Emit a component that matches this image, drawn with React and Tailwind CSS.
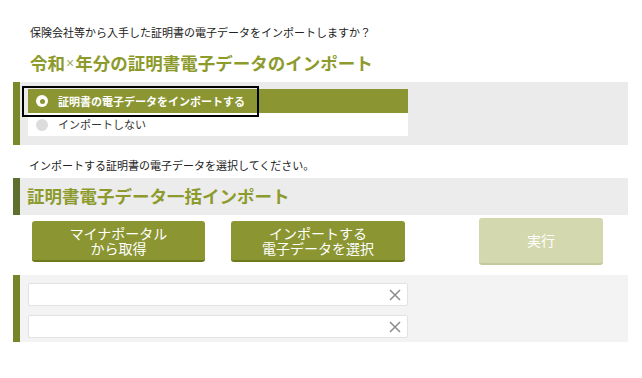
import React from "react";

const font = { fontFamily: '"Noto Sans CJK JP", "Noto Sans", sans-serif' };

const ClearIcon = () => (
  <svg width="12" height="12" viewBox="0 0 12 12" className="shrink-0">
    <path d="M1 1 L11 11 M11 1 L1 11" stroke="#8c8c8c" strokeWidth="1.5" fill="none" />
  </svg>
);

const FileInput = () => (
  <div className="flex items-center justify-end w-[380px] h-[23px] bg-white border border-[#e2e2e2] rounded-[2px] pr-[6px]">
    <ClearIcon />
  </div>
);

const ImportButton = ({ top, bottom, className }) => (
  <button
    className={
      "flex items-center justify-center h-[41px] rounded-[3px] bg-[#8b9633] border-b-2 border-[#6e781f] text-white text-[14px] leading-[15px] " +
      className
    }
  >
    <span className="text-center">
      {top}
      <br />
      {bottom}
    </span>
  </button>
);

export default function App() {
  return (
    <div className="w-[642px] h-[378px] bg-white text-[#222]" style={font}>
      <div className="px-[13px] pt-[24px]">
        <p className="pl-[17px] text-[11px] leading-[16px] text-[#222]">
          保険会社等から入手した証明書の電子データをインポートしますか？
        </p>
        <h1 className="flex items-center h-[24px] pl-[17px] mt-[11px] text-[17.5px] leading-[24px] font-bold text-[#8d9a2c] whitespace-nowrap">
          令和
          <span
            className="inline-block leading-none px-[1px] font-normal text-[14px] text-[#a3ad5e]"
            style={{ fontFamily: '"Liberation Sans", sans-serif' }}
          >
            ×
          </span>
          年分の証明書電子データのインポート
        </h1>

        {/* radio panel */}
        <div className="flex mt-[7px] h-[63px] w-[615px]">
          <div className="w-[7px] bg-[#7c892b]" />
          <div className="flex-1 bg-[#ebebeb] pl-[8px] pt-[7px]">
            <div className="relative w-[380px]">
              <div className="flex items-center h-[24px] bg-[#8b9633] pl-[8px]">
                <span className="flex items-center justify-center w-[12px] h-[12px] rounded-full bg-white">
                  <span className="w-[5px] h-[5px] rounded-full bg-[#8b9633]" />
                </span>
                <span className="ml-[10px] text-[11px] font-bold text-white">
                  証明書の電子データをインポートする
                </span>
              </div>
              <div className="flex items-center h-[23px] bg-white pl-[8px]">
                <span className="w-[12px] h-[12px] rounded-full bg-[#dcdcdc]" />
                <span className="ml-[10px] text-[11px] text-[#333]">インポートしない</span>
              </div>
              <div className="absolute left-[-6px] top-[-3px] w-[237px] h-[31px] border-2 border-black" />
            </div>
          </div>
        </div>

        <p className="pl-[16px] mt-[12px] text-[11px] leading-[16px] text-[#222]">
          インポートする証明書の電子データを選択してください。
        </p>

        {/* section header */}
        <div className="flex mt-[5px] h-[37px] w-[615px]">
          <div className="w-[7px] bg-[#5d6e2d]" />
          <div className="flex-1 flex items-center bg-[#ececec] pl-[7px]">
            <h2 className="text-[17.5px] font-bold text-[#8d9a2c]">証明書電子データ一括インポート</h2>
          </div>
        </div>

        {/* buttons */}
        <div className="flex items-center h-[53px] pl-[19px]">
          <ImportButton top="マイナポータル" bottom="から取得" className="w-[173px]" />
          <ImportButton top="インポートする" bottom="電子データを選択" className="w-[174px] ml-[26px]" />
          <button className="ml-[74px] w-[124px] h-[47px] rounded-[3px] bg-[#d3d8ae] border-b-2 border-[#c3c99a] text-white text-[14px]">
            実行
          </button>
        </div>

        {/* input panel */}
        <div className="flex mt-[7px] h-[67px] w-[615px]">
          <div className="w-[7px] bg-[#77852a]" />
          <div className="flex-1 flex flex-col gap-[9px] bg-[#f3f3f3] pl-[8px] pt-[8px]">
            <FileInput />
            <FileInput />
          </div>
        </div>
      </div>
    </div>
  );
}
